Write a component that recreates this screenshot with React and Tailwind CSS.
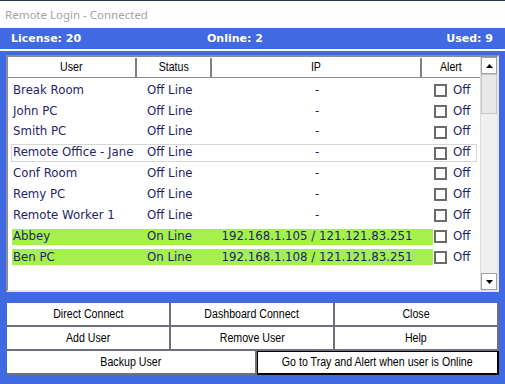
import React from "react";

const rows = [
  { u: "Break Room", s: "Off Line", ip: "-" },
  { u: "John PC", s: "Off Line", ip: "-" },
  { u: "Smith PC", s: "Off Line", ip: "-" },
  { u: "Remote Office - Jane", s: "Off Line", ip: "-", focus: true },
  { u: "Conf Room", s: "Off Line", ip: "-" },
  { u: "Remy PC", s: "Off Line", ip: "-" },
  { u: "Remote Worker 1", s: "Off Line", ip: "-" },
  { u: "Abbey", s: "On Line", ip: "192.168.1.105 / 121.121.83.251", on: true },
  { u: "Ben PC", s: "On Line", ip: "192.168.1.108 / 121.121.83.251", on: true },
];

const ms = { fontFamily: "'Liberation Sans', Arial, sans-serif" };
const verd = { fontFamily: "'DejaVu Sans', Verdana, sans-serif" };

function N({ children }) {
  return <span className="inline-block whitespace-nowrap scale-x-[0.85]">{children}</span>;
}

function Btn({ children, className = "flex-1" }) {
  return (
    <div
      className={
        "h-full bg-white flex items-center justify-center border-r-2 border-b-2 border-[#6f6f80] text-[12.5px] text-black " +
        className
      }
      style={ms}
    >
      <N>{children}</N>
    </div>
  );
}

function Check() {
  return (
    <div className="flex items-center">
      <div className="w-[13px] h-[13px] border-2 border-[#6b6b6b] bg-white" />
      <span className="ml-[6px]">Off</span>
    </div>
  );
}

export default function App() {
  return (
    <div className="w-[505px] h-[384px] bg-[#4169e1] flex flex-col overflow-hidden">
      <div className="h-[28px] bg-white border-t border-[#2a3550] flex items-center pl-[5px]">
        <span className="text-[11.5px] text-[#a3a3a3]" style={{ fontFamily: "'Noto Sans', sans-serif" }}>
          Remote Login - Connected
        </span>
      </div>
      <div className="h-[21px] flex items-center pl-[11px] pr-[12px] pt-[1px] text-white font-bold text-[11px]" style={verd}>
        <span className="w-[196px]">License: 20</span>
        <span>Online: 2</span>
        <span className="flex-1" />
        <span>Used: 9</span>
      </div>
      <div className="h-[2px] bg-white" />
      <div className="h-[4px]" />
      <div className="ml-[6px] w-[493px] h-[237px] bg-white border-2 border-t-[#8c8c99] border-l-[#8c8c99] border-r-[#e5e5ee] border-b-[#e5e5ee] flex">
        <div className="flex-1 flex flex-col">
          <div className="h-[20px] flex text-[12.5px] text-black border-b border-[#8c8c8c] mt-[1px]" style={ms}>
            <div className="w-[129px] flex items-center justify-center border-r-2 border-[#808080]"><N>User</N></div>
            <div className="w-[75px] flex items-center justify-center border-r-2 border-[#808080]"><N>Status</N></div>
            <div className="w-[210px] flex items-center justify-center border-r-2 border-[#808080]"><N>IP</N></div>
            <div className="flex-1 flex items-center justify-center"><N>Alert</N></div>
          </div>
          <div className="flex flex-col pt-[2px]">
            {rows.map((r, i) => (
              <div key={i} className="h-[20.875px] flex items-center text-[11.75px] text-[#1f1f6b]" style={verd}>
                <div
                  className={
                    "ml-[3px] h-[18px] flex items-center border " +
                    (r.focus ? "border-[#d6d6d6] w-[466px]" : "border-transparent w-[423px]")
                  }
                >
                  <div className={"h-[16px] w-[421px] flex items-center " + (r.on ? "bg-[#a4f04c]" : "")}>
                    <div className="w-[135px] pl-[1px] whitespace-nowrap">{r.u}</div>
                    <div className="w-[65px] whitespace-nowrap">{r.s}</div>
                    <div className="w-[210px] text-center whitespace-nowrap">{r.ip}</div>
                  </div>
                  {r.focus ? (
                    <div className="ml-[1px]">
                      <Check />
                    </div>
                  ) : null}
                </div>
                {!r.focus && <Check />}
              </div>
            ))}
          </div>
        </div>
        <div className="w-[17px] bg-[#f0f0f0] flex flex-col border-l border-[#dcdcdc]">
          <div className="h-[17px] bg-white border border-[#a0a0a0] flex items-center justify-center">
            <svg width="7" height="4" viewBox="0 0 7 4"><path d="M3.5 0 L7 4 L0 4 Z" fill="#000" /></svg>
          </div>
          <div className="h-[40px] bg-[#e8e8e8] border border-[#c8c8c8]" />
          <div className="flex-1" />
          <div className="h-[17px] bg-white border border-[#a0a0a0] flex items-center justify-center">
            <svg width="7" height="4" viewBox="0 0 7 4"><path d="M0 0 L7 0 L3.5 4 Z" fill="#000" /></svg>
          </div>
        </div>
      </div>
      <div className="h-[11px]" />
      <div className="ml-[7px] w-[492px] flex flex-col">
        <div className="h-[24px] flex">
          <Btn>Direct Connect</Btn>
          <Btn>Dashboard Connect</Btn>
          <Btn>Close</Btn>
        </div>
        <div className="h-[24px] flex">
          <Btn>Add User</Btn>
          <Btn>Remove User</Btn>
          <Btn>Help</Btn>
        </div>
        <div className="h-[24px] flex">
          <Btn className="w-[250px]">Backup User</Btn>
          <div
            className="flex-1 h-full bg-white flex items-center justify-center border border-black border-r-2 border-b-2 text-[12.5px] text-black"
            style={ms}
          >
            <N>Go to Tray and Alert when user is Online</N>
          </div>
        </div>
      </div>
    </div>
  );
}
